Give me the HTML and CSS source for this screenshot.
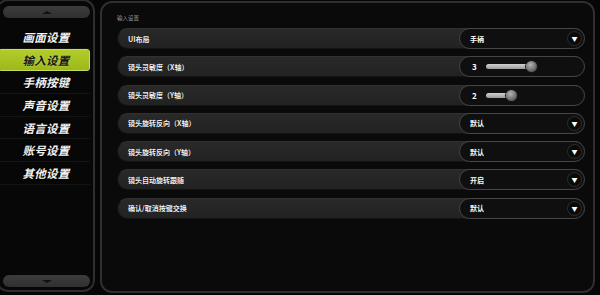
FILE: index.html
```html
<!DOCTYPE html>
<html lang="zh-CN">
<head>
<meta charset="utf-8">
<title>输入设置</title>
<link rel="stylesheet" href="styles.css">
</head>
<body>
<div class="app">
  <aside class="side">
    <div class="scroll-btn"><span class="chev up"></span></div>
    <ul class="menu">
      <li class="menu-item">画面设置</li>
      <li class="menu-item active">输入设置</li>
      <li class="menu-item">手柄按键</li>
      <li class="menu-item">声音设置</li>
      <li class="menu-item">语言设置</li>
      <li class="menu-item">账号设置</li>
      <li class="menu-item">其他设置</li>
    </ul>
    <div class="scroll-btn"><span class="chev down"></span></div>
  </aside>
  <main class="panel">
    <div class="panel-title">输入设置</div>
    <div class="rows">
      <div class="row"><span class="label">UI布局</span>
        <div class="ctrl select"><span class="val">手柄</span><span class="arrow">▼</span></div></div>
      <div class="row"><span class="label">镜头灵敏度（X轴）</span>
        <div class="ctrl slider"><span class="num">3</span><div class="track"><div class="fill" style="width:44px"></div><span class="knob"></span></div></div></div>
      <div class="row"><span class="label">镜头灵敏度（Y轴）</span>
        <div class="ctrl slider"><span class="num">2</span><div class="track"><div class="fill" style="width:24px"></div><span class="knob"></span></div></div></div>
      <div class="row"><span class="label">镜头旋转反向（X轴）</span>
        <div class="ctrl select"><span class="val">默认</span><span class="arrow">▼</span></div></div>
      <div class="row"><span class="label">镜头旋转反向（Y轴）</span>
        <div class="ctrl select"><span class="val">默认</span><span class="arrow">▼</span></div></div>
      <div class="row"><span class="label">镜头自动旋转跟随</span>
        <div class="ctrl select"><span class="val">开启</span><span class="arrow">▼</span></div></div>
      <div class="row"><span class="label">确认/取消按键交换</span>
        <div class="ctrl select"><span class="val">默认</span><span class="arrow">▼</span></div></div>
    </div>
  </main>
</div>
</body>
</html>
```
FILE: styles.css
```css
* { box-sizing: border-box; margin: 0; padding: 0; }
html, body { width: 600px; height: 295px; overflow: hidden; }
body {
  background: #060606;
  font-family: "Noto Sans CJK SC", "Noto Sans", sans-serif;
  color: #fff;
}
.app {
  display: flex;
  gap: 5px;
  height: 295px;
  padding: 0 5px 2px 0;
}
.side {
  width: 99px;
  margin-left: -4px;
  height: 293px;
  margin-top: -1px;
  border: 2px solid #2e2e2e;
  border-radius: 12px;
  background: #070707;
  display: flex;
  flex-direction: column;
  padding: 5px 3px 3px 5px;
}
.scroll-btn {
  height: 12px;
  background: linear-gradient(#3c3c3c, #303030);
  border-radius: 6px;
  display: flex;
  align-items: center;
  justify-content: center;
}
.chev {
  width: 0; height: 0;
  border-left: 5px solid transparent;
  border-right: 5px solid transparent;
}
.chev.up { border-bottom: 3px solid #111; }
.chev.down { border-top: 3px solid #111; }
.menu {
  list-style: none;
  flex: 1;
  padding-top: 8px;
}
.menu-item {
  height: 22.7px;
  display: flex;
  align-items: center;
  justify-content: center;
  font-size: 11.5px;
  font-weight: 700;
  font-style: italic;
  letter-spacing: 0.3px;
  color: #f2f2f2;
  border-bottom: 1px solid #141414;
  text-shadow: 0 0 2px #000, 1px 1px 0 #000;
  margin-left: -5px;
  padding-left: 4px;
}
.menu-item.active {
  background: linear-gradient(#b2cc2a, #9db81c);
  color: #151515;
  border: 1px solid #c7dc60;
  border-radius: 3px;
  text-shadow: 0 0 2px #d9ea7a;
}
.panel {
  flex: 1;
  height: 292px;
  margin-top: 1px;
  border: 2px solid #2f2f2f;
  border-radius: 12px;
  background: #0a0a0a;
  padding: 11px 8px 0 15px;
}
.panel-title {
  font-size: 5.5px;
  color: #9a9a9a;
  height: 14px;
  line-height: 8px;
}
.rows {
  display: flex;
  flex-direction: column;
  gap: 7.3px;
}
.row {
  height: 21px;
  display: flex;
  align-items: center;
  justify-content: space-between;
  background: linear-gradient(#292929, #222);
  border: 1px solid #141414;
  border-top-color: #313131;
  border-radius: 11px;
}
.label {
  padding-left: 10px;
  font-size: 7px;
  font-weight: 700;
  color: #f0f0f0;
  text-shadow: 0 0 1px #000;
}
.ctrl {
  width: 126px;
  height: 21px;
  margin-right: -1px;
  background: #0f0f0f;
  border: 1px solid #474747;
  border-radius: 11px;
  display: flex;
  align-items: center;
}
.select { justify-content: space-between; padding: 0 3px 0 10px; }
.val {
  font-size: 7px;
  font-weight: 700;
  color: #fff;
}
.arrow {
  width: 13px; height: 13px;
  border-radius: 50%;
  background: #0a0a0a;
  box-shadow: 0 0 0 1px #2a2a2a;
  font-size: 6px;
  line-height: 13px;
  text-align: center;
  color: #fff;
}
.slider { padding-left: 12px; gap: 8px; }
.num {
  font-size: 8px;
  font-weight: 700;
  color: #fff;
  width: 6px;
}
.track {
  width: 80px;
  height: 6px;
  display: flex;
  align-items: center;
}
.fill {
  height: 5px;
  background: linear-gradient(#d0d0d0, #9a9a9a);
  border-radius: 3px;
}
.knob {
  width: 11px; height: 11px;
  margin-left: -4px;
  border-radius: 50%;
  background: radial-gradient(circle at 40% 35%, #b5b5b5, #6a6a6a 60%, #3a3a3a);
  box-shadow: 0 0 0 1px #1a1a1a;
}
```
